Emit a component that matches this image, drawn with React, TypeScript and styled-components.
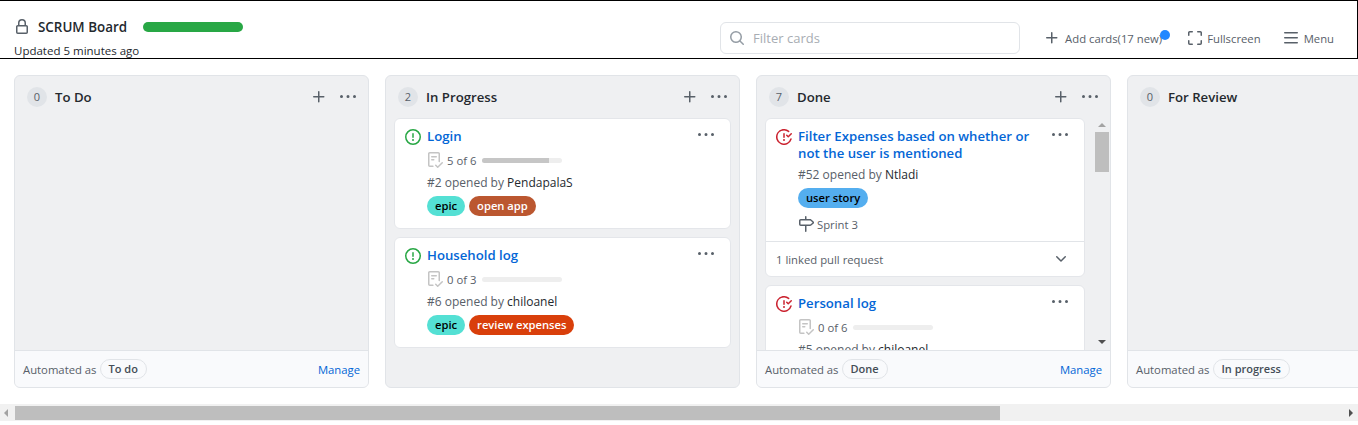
import { ReactNode } from "react";
import styled, { createGlobalStyle } from "styled-components";

const GlobalStyle = createGlobalStyle`
  * { box-sizing: border-box; }
  html, body { margin: 0; padding: 0; background: #fff; overflow: hidden; }
  body { font-family: "Open Sans", "Noto Sans", "Liberation Sans", sans-serif; color: #24292e; }
`;

const ICONS: Record<string, string> = {
  lock: "M4 4a4 4 0 018 0v2h.25c.966 0 1.75.784 1.75 1.75v5.5A1.75 1.75 0 0112.25 15h-8.5A1.75 1.75 0 012 13.25v-5.5C2 6.784 2.784 6 3.75 6H4zm6.5 2V4a2.5 2.5 0 10-5 0v2zM3.5 7.75v5.5c0 .138.112.25.25.25h8.5a.25.25 0 00.25-.25v-5.5a.25.25 0 00-.25-.25h-8.5a.25.25 0 00-.25.25z",
  search: "M10.68 11.74a6 6 0 01-7.922-8.982 6 6 0 018.982 7.922l3.04 3.04a.749.749 0 11-1.06 1.06l-3.04-3.04zM11.5 7a4.499 4.499 0 10-8.997 0A4.499 4.499 0 0011.5 7z",
  plus: "M7.75 2a.75.75 0 01.75.75V7h4.25a.75.75 0 110 1.5H8.5v4.25a.75.75 0 11-1.5 0V8.5H2.75a.75.75 0 010-1.5H7V2.75A.75.75 0 017.75 2z",
  full: "M1.75 10a.75.75 0 01.75.75v2.5c0 .138.112.25.25.25h2.5a.75.75 0 010 1.5h-2.5A1.75 1.75 0 011 13.25v-2.5a.75.75 0 01.75-.75zm12.5 0a.75.75 0 01.75.75v2.5A1.75 1.75 0 0113.25 15h-2.5a.75.75 0 010-1.5h2.5a.25.25 0 00.25-.25v-2.5a.75.75 0 01.75-.75zM2.75 2.5a.25.25 0 00-.25.25v2.5a.75.75 0 01-1.5 0v-2.5C1 1.784 1.784 1 2.75 1h2.5a.75.75 0 010 1.5zM10 1.75a.75.75 0 01.75-.75h2.5c.966 0 1.75.784 1.75 1.75v2.5a.75.75 0 01-1.5 0v-2.5a.25.25 0 00-.25-.25h-2.5a.75.75 0 01-.75-.75z",
  bars: "M1 2.75A.75.75 0 011.75 2h12.5a.75.75 0 010 1.5H1.75A.75.75 0 011 2.75zm0 5A.75.75 0 011.75 7h12.5a.75.75 0 010 1.5H1.75A.75.75 0 011 7.75zM1.75 12a.75.75 0 000 1.5h12.5a.75.75 0 000-1.5H1.75z",
  kebab: "M8 9a1.5 1.5 0 100-3 1.5 1.5 0 000 3zM1.5 9a1.5 1.5 0 100-3 1.5 1.5 0 000 3zm13 0a1.5 1.5 0 100-3 1.5 1.5 0 000 3z",
  open: "M8 1.5a6.5 6.5 0 100 13 6.5 6.5 0 000-13zM0 8a8 8 0 1116 0A8 8 0 010 8zm9 3a1 1 0 11-2 0 1 1 0 012 0zm-.25-6.25a.75.75 0 00-1.5 0v3.5a.75.75 0 001.5 0v-3.5z",
  closed: "M1.5 8a6.5 6.5 0 0110.65-5.003.75.75 0 00.959-1.153 8 8 0 102.592 8.33.75.75 0 10-1.444-.407A6.5 6.5 0 011.5 8zM8 12a1 1 0 100-2 1 1 0 000 2zm0-8a.75.75 0 01.75.75v3.5a.75.75 0 11-1.5 0v-3.5A.75.75 0 018 4zm4.78 4.28l3-3a.75.75 0 00-1.06-1.06l-2.47 2.47-.97-.97a.749.749 0 10-1.06 1.06l1.5 1.5a.75.75 0 001.06 0z",
  checklist: "M2.5 1.75v11.5c0 .138.112.25.25.25h3.17a.75.75 0 010 1.5H2.75A1.75 1.75 0 011 13.25V1.75C1 .784 1.784 0 2.75 0h8.5C12.216 0 13 .784 13 1.75v7.736a.75.75 0 01-1.5 0V1.75a.25.25 0 00-.25-.25h-8.5a.25.25 0 00-.25.25zm13.274 9.537v-.001l-4.557 4.45a.75.75 0 01-1.055-.008l-1.943-1.95a.75.75 0 011.062-1.058l1.419 1.425 4.026-3.932a.75.75 0 111.048 1.074zM4.75 4h4.5a.75.75 0 010 1.5h-4.5a.75.75 0 010-1.5zM4 7.75A.75.75 0 014.75 7h2a.75.75 0 010 1.5h-2A.75.75 0 014 7.75z",
  milestone: "M7.75 0a.75.75 0 01.75.75V3h3.634c.414 0 .814.147 1.13.414l2.07 1.75a1.75 1.75 0 010 2.672l-2.07 1.75a1.75 1.75 0 01-1.13.414H8.5v5.25a.75.75 0 11-1.5 0V10H2.75A1.75 1.75 0 011 8.25v-3.5C1 3.784 1.784 3 2.75 3H7V.75A.75.75 0 017.75 0zm0 8.5h4.384a.25.25 0 00.161-.06l2.07-1.75a.248.248 0 000-.38l-2.07-1.75a.25.25 0 00-.161-.06H2.75a.25.25 0 00-.25.25v3.5c0 .138.112.25.25.25h5z",
  chevron: "M12.78 5.22a.749.749 0 010 1.06l-4.25 4.25a.749.749 0 01-1.06 0L3.22 6.28a.749.749 0 111.06-1.06L8 8.939l3.72-3.719a.749.749 0 011.06 0z",
};

function Icon(props: { name: string; size?: number; color: string }) {
  const size = props.size ?? 16;
  return (
    <svg width={size} height={size} viewBox="0 0 16 16" fill={props.color} style={{ flexShrink: 0, display: "block" }}>
      <path d={ICONS[props.name]} fillRule="evenodd" />
    </svg>
  );
}

const Page = styled.div`
  width: 1358px;
  height: 425px;
  display: flex;
  flex-direction: column;
  overflow: hidden;
`;

const Header = styled.header`
  height: 59px;
  border: 1px solid #000;
  border-left: none;
  display: flex;
  align-items: flex-end;
  justify-content: space-between;
  padding: 0 23px 4px 14px;
`;

const HeaderLeft = styled.div`
  display: flex;
  flex-direction: column;
  margin-bottom: -5px;
`;

const TitleRow = styled.div`
  display: flex;
  align-items: center;
  gap: 8px;
  margin-bottom: 6px;
`;

const BoardTitle = styled.span`
  font-size: 13.4px;
  font-weight: 600;
  line-height: 20px;
  margin-right: 8px;
`;

const ProgressPill = styled.div`
  width: 100px;
  height: 10px;
  border-radius: 5px;
  background: #28a745;
`;

const Updated = styled.div`
  font-size: 11.5px;
  line-height: 16px;
`;

const HeaderRight = styled.div`
  display: flex;
  align-items: center;
`;

const Filter = styled.div`
  width: 300px;
  height: 32px;
  border: 1px solid #e1e4e8;
  border-radius: 6px;
  display: flex;
  align-items: center;
  gap: 8px;
  padding: 0 8px;
  margin-right: 24px;
`;

const FilterText = styled.span`
  font-size: 13px;
  color: #a8adb3;
`;

const Action = styled.div<{ $gap: number; $ml?: number }>`
  position: relative;
  display: flex;
  align-items: center;
  gap: ${(p) => p.$gap}px;
  margin-left: ${(p) => p.$ml ?? 0}px;
  font-size: 11.3px;
  color: #586069;
`;

const Dot = styled.span`
  position: absolute;
  right: -8px;
  top: 0;
  width: 10px;
  height: 10px;
  border-radius: 50%;
  background: #2188ff;
`;

const Board = styled.main`
  height: 329px;
  padding: 16px 0 0 14px;
  display: flex;
  gap: 16px;
  overflow: hidden;
`;

const Column = styled.section`
  width: 355px;
  height: 313px;
  flex-shrink: 0;
  background: #eff0f2;
  border: 1px solid #e1e4e8;
  border-radius: 6px;
  display: flex;
  flex-direction: column;
  overflow: hidden;
`;

const ColumnHead = styled.div`
  height: 42px;
  flex-shrink: 0;
  display: flex;
  align-items: center;
  padding: 0 12px 1px;
`;

const Count = styled.span`
  width: 20px;
  height: 20px;
  border-radius: 50%;
  background: #e1e4e8;
  color: #586069;
  font-size: 11px;
  display: flex;
  align-items: center;
  justify-content: center;
  margin-right: 8px;
`;

const ColumnName = styled.h3`
  margin: 0;
  font-size: 13.2px;
  font-weight: 600;
  flex: 1;
`;

const HeadIcons = styled.div`
  display: flex;
  align-items: center;
  gap: 13px;
`;

const ColumnBody = styled.div`
  flex: 1;
  min-height: 0;
  display: flex;
  overflow: hidden;
`;

const CardList = styled.div`
  flex: 1;
  min-width: 0;
  padding: 0 8px;
  display: flex;
  flex-direction: column;
  gap: 8px;
`;

const Card = styled.article`
  flex-shrink: 0;
  background: #fff;
  border: 1px solid #e4e6ea;
  border-radius: 6px;
`;

const CardMain = styled.div`
  display: grid;
  grid-template-columns: 22px 1fr 22px;
  padding: 9px 10px 12px 10px;
`;

const StatusIcon = styled.div`
  padding-top: 1px;
`;

const CardMenu = styled.div`
  margin-top: -1px;
`;

const CardContent = styled.div`
  min-width: 0;
  display: flex;
  flex-direction: column;
`;

const CardTitle = styled.a`
  font-size: 13.2px;
  font-weight: 600;
  line-height: 17px;
  color: #0366d6;
`;

const Tasks = styled.div`
  display: flex;
  align-items: center;
  font-size: 11.3px;
  color: #586069;
  height: 20px;
  margin-top: 5px;
`;

const TaskLabel = styled.span`
  margin-left: 4px;
  margin-right: 6px;
`;

const TaskBar = styled.div`
  width: 80px;
  height: 5px;
  border-radius: 3px;
  background: #eeeeee;
  overflow: hidden;
`;

const TaskFill = styled.div`
  height: 100%;
  background: #c6c6c6;
`;

const Meta = styled.div`
  font-size: 12px;
  line-height: 18px;
  color: #586069;
  margin-top: 4px;
`;

const Author = styled.span`
  color: #24292e;
`;

const Labels = styled.div`
  display: flex;
  gap: 4px;
  margin-top: 4px;
`;

const Label = styled.span<{ $bg: string; $fg: string }>`
  height: 20px;
  padding: 0 8px;
  border-radius: 10px;
  background: ${(p) => p.$bg};
  color: ${(p) => p.$fg};
  font-size: 11.2px;
  font-weight: 600;
  line-height: 20px;
`;

const Sprint = styled.div`
  display: flex;
  align-items: center;
  gap: 3px;
  font-size: 11.3px;
  color: #586069;
  margin-top: 7px;
  margin-bottom: -4px;
  height: 18px;
`;

const LinkedRow = styled.div`
  height: 35px;
  border-top: 1px solid #e1e4e8;
  display: flex;
  align-items: center;
  justify-content: space-between;
  padding: 0 15px 0 10px;
  font-size: 11.3px;
  color: #586069;
`;

const VScroll = styled.div`
  width: 17px;
  flex-shrink: 0;
  display: flex;
  flex-direction: column;
  align-items: center;
`;

const ArrowUp = styled.div`
  margin-top: 5px;
  width: 0;
  height: 0;
  border-left: 4px solid transparent;
  border-right: 4px solid transparent;
  border-bottom: 4px solid #a3a3a3;
`;

const VThumb = styled.div`
  width: 14px;
  height: 40px;
  margin-top: 5px;
  background: #bebebe;
`;

const ArrowDown = styled.div`
  margin-top: auto;
  margin-bottom: 6px;
  width: 0;
  height: 0;
  border-left: 4px solid transparent;
  border-right: 4px solid transparent;
  border-top: 4px solid #505050;
`;

const ColumnFoot = styled.div`
  height: 37px;
  flex-shrink: 0;
  background: #f9fafc;
  border-top: 1px solid #e1e4e8;
  display: flex;
  align-items: center;
  padding: 0 8px;
  font-size: 11.3px;
  color: #586069;
`;

const AutoChip = styled.span`
  margin-left: 3px;
  height: 20px;
  padding: 0 8px;
  border: 1px solid #e1e4e8;
  border-radius: 10px;
  font-weight: 600;
  font-size: 11px;
  line-height: 18px;
  color: #444d56;
`;

const Manage = styled.a`
  margin-left: auto;
  color: #0366d6;
`;

const HScroll = styled.div`
  height: 17px;
  margin-top: 16px;
  background: #f1f1f1;
  display: flex;
  align-items: center;
`;

const ArrowLeft = styled.div`
  margin-left: 4px;
  width: 0;
  height: 0;
  border-top: 4px solid transparent;
  border-bottom: 4px solid transparent;
  border-right: 4px solid #a3a3a3;
`;

const HThumb = styled.div`
  width: 985px;
  height: 14px;
  margin-left: 7px;
  background: #bebebe;
`;

const ArrowRight = styled.div`
  margin-left: auto;
  margin-right: 5px;
  width: 0;
  height: 0;
  border-top: 4px solid transparent;
  border-bottom: 4px solid transparent;
  border-left: 4px solid #505050;
`;

function TaskRow(props: { done: number; total: number }) {
  return (
    <Tasks>
      <Icon name="checklist" color="#c4c4c4" />
      <TaskLabel>{props.done} of {props.total}</TaskLabel>
      <TaskBar>
        <TaskFill style={{ width: `${(props.done / props.total) * 100}%` }} />
      </TaskBar>
    </Tasks>
  );
}

function IssueCard(props: { status: "open" | "closed"; title: string; children: ReactNode; linked?: boolean }) {
  return (
    <Card>
      <CardMain>
        <StatusIcon>
          <Icon name={props.status} color={props.status === "open" ? "#28a745" : "#cb2431"} />
        </StatusIcon>
        <CardContent>
          <CardTitle>{props.title}</CardTitle>
          {props.children}
        </CardContent>
        <CardMenu>
          <Icon name="kebab" color="#586069" />
        </CardMenu>
      </CardMain>
      {props.linked && (
        <LinkedRow>
          1 linked pull request
          <Icon name="chevron" color="#586069" />
        </LinkedRow>
      )}
    </Card>
  );
}

function BoardColumn(props: { count: number; name: string; auto?: string; manage?: boolean; actions?: boolean; children?: ReactNode }) {
  return (
    <Column>
      <ColumnHead>
        <Count>{props.count}</Count>
        <ColumnName>{props.name}</ColumnName>
        {props.actions !== false && (
          <HeadIcons>
            <Icon name="plus" color="#586069" />
            <Icon name="kebab" color="#586069" />
          </HeadIcons>
        )}
      </ColumnHead>
      <ColumnBody>{props.children}</ColumnBody>
      {props.auto && (
        <ColumnFoot>
          Automated as <AutoChip>{props.auto}</AutoChip>
          {props.manage !== false && <Manage>Manage</Manage>}
        </ColumnFoot>
      )}
    </Column>
  );
}

function App() {
  return (
    <Page>
      <GlobalStyle />
      <Header>
        <HeaderLeft>
          <TitleRow>
            <Icon name="lock" color="#586069" />
            <BoardTitle>SCRUM Board</BoardTitle>
            <ProgressPill />
          </TitleRow>
          <Updated>Updated 5 minutes ago</Updated>
        </HeaderLeft>
        <HeaderRight>
          <Filter>
            <Icon name="search" color="#959da5" />
            <FilterText>Filter cards</FilterText>
          </Filter>
          <Action $gap={5}>
            <Icon name="plus" color="#586069" />
            Add cards(17 new)
            <Dot />
          </Action>
          <Action $gap={4} $ml={25}>
            <Icon name="full" color="#586069" />
            Fullscreen
          </Action>
          <Action $gap={5} $ml={22}>
            <Icon name="bars" color="#586069" />
            Menu
          </Action>
        </HeaderRight>
      </Header>
      <Board>
        <BoardColumn count={0} name="To Do" auto="To do" />
        <BoardColumn count={2} name="In Progress">
          <CardList>
            <IssueCard status="open" title="Login">
              <TaskRow done={5} total={6} />
              <Meta>#2 opened by <Author>PendapalaS</Author></Meta>
              <Labels>
                <Label $bg="#54e0d4" $fg="#000">epic</Label>
                <Label $bg="#bb5730" $fg="#fff">open app</Label>
              </Labels>
            </IssueCard>
            <IssueCard status="open" title="Household log">
              <TaskRow done={0} total={3} />
              <Meta>#6 opened by <Author>chiloanel</Author></Meta>
              <Labels>
                <Label $bg="#54e0d4" $fg="#000">epic</Label>
                <Label $bg="#d93f0b" $fg="#fff">review expenses</Label>
              </Labels>
            </IssueCard>
          </CardList>
        </BoardColumn>
        <BoardColumn count={7} name="Done" auto="Done">
          <CardList>
            <IssueCard status="closed" title="Filter Expenses based on whether or not the user is mentioned" linked>
              <Meta>#52 opened by <Author>Ntladi</Author></Meta>
              <Labels>
                <Label $bg="#54aeef" $fg="#000">user story</Label>
              </Labels>
              <Sprint>
                <Icon name="milestone" color="#586069" />
                Sprint 3
              </Sprint>
            </IssueCard>
            <IssueCard status="closed" title="Personal log">
              <TaskRow done={0} total={6} />
              <Meta>#5 opened by <Author>chiloanel</Author></Meta>
            </IssueCard>
          </CardList>
          <VScroll>
            <ArrowUp />
            <VThumb />
            <ArrowDown />
          </VScroll>
        </BoardColumn>
        <BoardColumn count={0} name="For Review" auto="In progress" manage={false} />
      </Board>
      <HScroll>
        <ArrowLeft />
        <HThumb />
        <ArrowRight />
      </HScroll>
    </Page>
  );
}

export default App;
